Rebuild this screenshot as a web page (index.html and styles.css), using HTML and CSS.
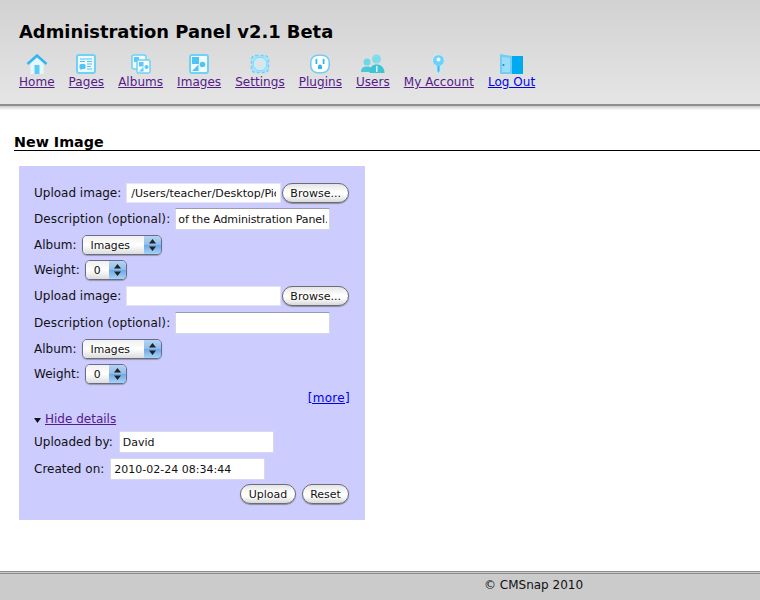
FILE: index.html
```html
<!DOCTYPE html>
<html lang="en">
<head>
<meta charset="utf-8">
<title>Administration Panel v2.1 Beta</title>
<link rel="stylesheet" href="styles.css">
</head>
<body>
<header class="masthead">
  <h1 class="site-title">Administration Panel v2.1 Beta</h1>
  <nav class="nav">
    <a class="nav-item" href="#home">
      <svg class="icon" width="22" height="20" viewBox="0 0 22 20"><path d="M1.500 10 11 1.500 20.500 10" fill="none" stroke="#2cb8f5" stroke-width="2.500"/><path d="M4.500 9.500 11 4l6.500 5.500V20h-13z" fill="#e6f8ff"/><rect x="8.500" y="11" width="5" height="9" fill="#5cc9f7"/></svg>
      <span>Home</span>
    </a>
    <a class="nav-item" href="#pages">
      <svg class="icon" width="20" height="20" viewBox="0 0 20 20"><rect x="1" y="1" width="18" height="18" rx="2" fill="#eefaff" stroke="#6fd0f8" stroke-width="2"/><path d="M4 5h12M4 7.500h5M11 7.500h5M11 10h5M11 12.500h4M4 15h2M11 15h5" stroke="#4fc5f6" stroke-width="1.200"/><rect x="3.500" y="10" width="6" height="5" rx="1.500" fill="#4fc5f6"/></svg>
      <span>Pages</span>
    </a>
    <a class="nav-item" href="#albums">
      <svg class="icon" width="20" height="20" viewBox="0 0 20 20"><rect x="1" y="1" width="14" height="14" rx="2" fill="#eefaff" stroke="#6fd0f8" stroke-width="1.500"/><rect x="3" y="3" width="5" height="5" fill="#5cc9f7"/><rect x="6" y="6" width="13" height="13" rx="1.500" fill="#f6fcff" stroke="#6fd0f8" stroke-width="1.500"/><rect x="8" y="8" width="4.500" height="4.500" fill="#5cc9f7"/><circle cx="15.500" cy="13" r="2" fill="#5cc9f7"/><path d="M8 17.500 12.500 13v4.500z" fill="#5cc9f7"/></svg>
      <span>Albums</span>
    </a>
    <a class="nav-item" href="#images">
      <svg class="icon" width="20" height="20" viewBox="0 0 20 20"><rect x="1" y="1" width="18" height="18" rx="2" fill="#f2fbff" stroke="#6fd0f8" stroke-width="2"/><rect x="3" y="3" width="7" height="7" fill="#4fc5f6"/><circle cx="13.500" cy="10.500" r="2.800" fill="#4fc5f6"/><path d="M3 17 9.500 10.500V17z" fill="#4fc5f6"/></svg>
      <span>Images</span>
    </a>
    <a class="nav-item" href="#settings">
      <svg class="icon" width="20" height="20" viewBox="0 0 20 20"><rect x="1.500" y="1.500" width="17" height="17" rx="4" fill="#a8e3fb" stroke="#6fd0f8" stroke-width="1.500" stroke-dasharray="3 2"/><circle cx="10" cy="10" r="6.800" fill="#c4ecfb" stroke="#86d9f9" stroke-width="1"/><circle cx="10" cy="10" r="4.500" fill="#dfe3e6"/></svg>
      <span>Settings</span>
    </a>
    <a class="nav-item" href="#plugins">
      <svg class="icon" width="20" height="20" viewBox="0 0 20 20"><rect x="0.800" y="1.200" width="18.400" height="17.600" rx="7" fill="#fff" stroke="#6fd0f8" stroke-width="1.600"/><rect x="5.500" y="5" width="1.800" height="5" fill="#2cb8f5"/><rect x="12.700" y="5" width="1.800" height="5" fill="#2cb8f5"/><path d="M8 15v-2.500a2 2 0 0 1 4 0V15z" fill="#2cb8f5"/></svg>
      <span>Plugins</span>
    </a>
    <a class="nav-item" href="#users">
      <svg class="icon" width="24" height="20" viewBox="0 0 24 20"><circle cx="6" cy="8" r="3.500" fill="#6fd8e8"/><path d="M0 18c0-4 2-5.500 6-5.500s5 1.500 5 5.500z" fill="#48c8da"/><circle cx="15.500" cy="5" r="4.500" fill="#7ddeea"/><path d="M8.500 19c0-6 3-8.500 7-8.500s8 2.500 8 8.500z" fill="#3ec4d8"/><path d="M15 12h1.500v6H15z" fill="#e2f8fb"/></svg>
      <span>Users</span>
    </a>
    <a class="nav-item" href="#account">
      <svg class="icon" width="13" height="20" viewBox="0 0 13 20"><path d="M6.500 0.800a5.700 5.700 0 0 1 2.200 11V17l-2.200 2.700-2.200-2.700v-5.200A5.700 5.700 0 0 1 6.500 0.800z" fill="#6fd0f8" stroke="#d4f1fc" stroke-width="0.800"/><circle cx="6.500" cy="5.500" r="2" fill="#f2fbff"/><path d="M6.500 12v5" stroke="#3fb8ef"/></svg>
      <span>My Account</span>
    </a>
    <a class="nav-item" href="#logout">
      <svg class="icon" width="23" height="20" viewBox="0 0 23 20"><rect x="12" y="2" width="11" height="18" fill="#00aaf0"/><path d="M0 0l12 2v18H0z" fill="#6fcdf7"/><path d="M2 3l8 1v14H2z" fill="#9adcf9"/><circle cx="3.500" cy="11" r="1" fill="#1184c4"/></svg>
      <span>Log Out</span>
    </a>
  </nav>
</header>

<main class="content">
  <h2 class="page-title">New Image</h2>
  <form class="panel">
    <div class="row">
      <label class="label">Upload image:</label>
      <input class="field field-file" type="text" value="/Users/teacher/Desktop/Pictures/admin.png">
      <button class="btn btn-browse" type="button">Browse...</button>
    </div>
    <div class="row row-tall">
      <label class="label label-desc">Description (optional):</label>
      <input class="field field-desc" type="text" value="of the Administration Panel.">
    </div>
    <div class="row">
      <label class="label">Album:</label>
      <div class="select select-album"><span class="select-value">Images</span><span class="select-arrows"><svg width="7" height="12" viewBox="0 0 7 12"><path d="M3.500 0 7 4.500H0zM3.500 12 0 7.500h7z" fill="#222"/></svg></span></div>
    </div>
    <div class="row row-group-end">
      <label class="label">Weight:</label>
      <div class="select select-weight"><span class="select-value">0</span><span class="select-arrows"><svg width="7" height="12" viewBox="0 0 7 12"><path d="M3.500 0 7 4.500H0zM3.500 12 0 7.500h7z" fill="#222"/></svg></span></div>
    </div>
    <div class="row row-group-end">
      <label class="label">Upload image:</label>
      <input class="field field-file" type="text">
      <button class="btn btn-browse" type="button">Browse...</button>
    </div>
    <div class="row row-tall">
      <label class="label label-desc">Description (optional):</label>
      <input class="field field-desc" type="text">
    </div>
    <div class="row">
      <label class="label">Album:</label>
      <div class="select select-album"><span class="select-value">Images</span><span class="select-arrows"><svg width="7" height="12" viewBox="0 0 7 12"><path d="M3.500 0 7 4.500H0zM3.500 12 0 7.500h7z" fill="#222"/></svg></span></div>
    </div>
    <div class="row">
      <label class="label">Weight:</label>
      <div class="select select-weight"><span class="select-value">0</span><span class="select-arrows"><svg width="7" height="12" viewBox="0 0 7 12"><path d="M3.500 0 7 4.500H0zM3.500 12 0 7.500h7z" fill="#222"/></svg></span></div>
    </div>
    <div class="more"><a class="link-new" href="#more">[more]</a></div>
    <div class="details-toggle"><svg class="caret" width="7" height="5" viewBox="0 0 7 5"><path d="M0 0h7L3.500 5z" fill="#111"/></svg><a class="link-visited" href="#details">Hide details</a></div>
    <div class="row row-tall">
      <label class="label label-meta">Uploaded by:</label>
      <input class="field field-meta" type="text" value="David">
    </div>
    <div class="row row-tall row-last">
      <label class="label label-meta">Created on:</label>
      <input class="field field-meta" type="text" value="2010-02-24 08:34:44">
    </div>
    <div class="actions">
      <button class="btn btn-action" type="button">Upload</button>
      <button class="btn btn-action" type="button">Reset</button>
    </div>
  </form>
</main>

<footer class="footer"><span class="copyright">© CMSnap 2010</span></footer>
</body>
</html>
```
FILE: styles.css
```css
* { box-sizing: border-box; }
html, body { margin: 0; padding: 0; height: 600px; overflow: hidden; }
body {
  width: 760px;
  display: flex;
  flex-direction: column;
  background: #fff;
  color: #111;
  font-family: "DejaVu Sans", Verdana, sans-serif;
  font-size: 12px;
}
.masthead {
  height: 110px;
  padding: 21px 0 0 19px;
  background:
    linear-gradient(#cdcdcd, #fbfbfb) left bottom / 100% 4px no-repeat,
    linear-gradient(#8f8f8f, #8f8f8f) left 104px / 100% 2px no-repeat,
    linear-gradient(#d2d2d2, #e5e5e5) left top / 100% 104px no-repeat;
}
.site-title {
  margin: 0;
  font-size: 17.900px;
  line-height: 22px;
  font-weight: 700;
  color: #000;
}
.nav { display: flex; gap: 14px; margin-top: 11px; }
.nav-item {
  display: flex;
  flex-direction: column;
  align-items: center;
  gap: 1px;
  color: #551a8b;
  font-size: 12px;
  line-height: 15px;
  letter-spacing: 0.040px;
}
.nav-item:last-child { color: #0000ee; }
.icon { display: block; }
.content { flex: 1; padding-top: 23px; }
.page-title {
  margin: 0 0 15px 14px;
  font-size: 14.300px;
  line-height: 18px;
  height: 18px;
  color: #000;
  border-bottom: 1px solid #000;
}
.panel {
  width: 346px;
  height: 354px;
  margin-left: 19px;
  padding: 17px 16px 0 15px;
  background: #ccccff;
}
.row { display: flex; align-items: center; height: 20px; margin-bottom: 5px; }
.row-tall { height: 22px; }
.row-group-end { margin-bottom: 6px; }
.row-last { margin-bottom: 4px; }
.label { margin-right: 5px; white-space: nowrap; }
.label-desc { letter-spacing: 0.090px; }
.label-meta { margin-right: 6px; }
.field {
  height: 100%;
  padding: 0 4px;
  background: #fff;
  color: #111;
  font: inherit;
  font-size: 11px;
  width: 155px;
  outline: none;
  border: 1px solid #d6d6e6;
  border-top-color: #9a9aa8;
}
.field-file { border-color: #e4e4f2; }
.field-desc { padding: 0 2px; letter-spacing: -0.100px; }
.field-meta { padding: 0 3px; border-color: #d8d8ea; }
.btn {
  height: 20px;
  padding: 0;
  border: 1px solid #6c6c74;
  border-radius: 10px;
  background: linear-gradient(#e4e4e4 0%, #ffffff 45%, #ffffff 60%, #d8d8d8 100%);
  color: #111;
  font: inherit;
  font-size: 11px;
  box-shadow: 0 1px 1px #8c8c9c;
}
.btn-browse { width: 67px; margin-left: 1px; }
.select {
  display: flex;
  height: 20px;
  border: 1px solid #6a6a8a;
  border-radius: 5px;
  overflow: hidden;
  box-shadow: 0 1px 1px #9898a8;
  font-size: 10.800px;
  line-height: 19px;
}
.select-album { width: 80px; }
.select-weight { width: 42px; }
.select-value {
  flex: 1;
  padding-left: 8px;
  background: linear-gradient(#f0f0f0 0%, #ffffff 50%, #dcdcdc 100%);
}
.select-arrows {
  width: 17px;
  display: flex;
  align-items: center;
  justify-content: center;
  background: linear-gradient(#b6d4f2 0%, #8fbcea 50%, #6fa8e6 51%, #a6d2f6 100%);
}
.more {
  height: 17px;
  margin-top: 6px;
  margin-right: -1px;
  text-align: right;
  line-height: 17px;
  letter-spacing: 0.300px;
}
.link-new { color: #0000ee; }
.link-visited { color: #551a8b; }
.details-toggle {
  display: flex;
  align-items: center;
  gap: 4px;
  height: 17px;
  margin: 4px 0 3px;
  line-height: 17px;
}
.caret { display: block; margin-top: 2px; }
.actions { display: flex; justify-content: flex-end; gap: 6px; }
.btn-action { width: 56px; }
.btn-action:last-child { width: 47px; }
.footer {
  height: 29px;
  background: #cbcbcb;
  border-top: 3px double #8c8c8c;
  padding-left: 484px;
  line-height: 22px;
  font-size: 12px;
}
.copyright { color: #111; }
```
